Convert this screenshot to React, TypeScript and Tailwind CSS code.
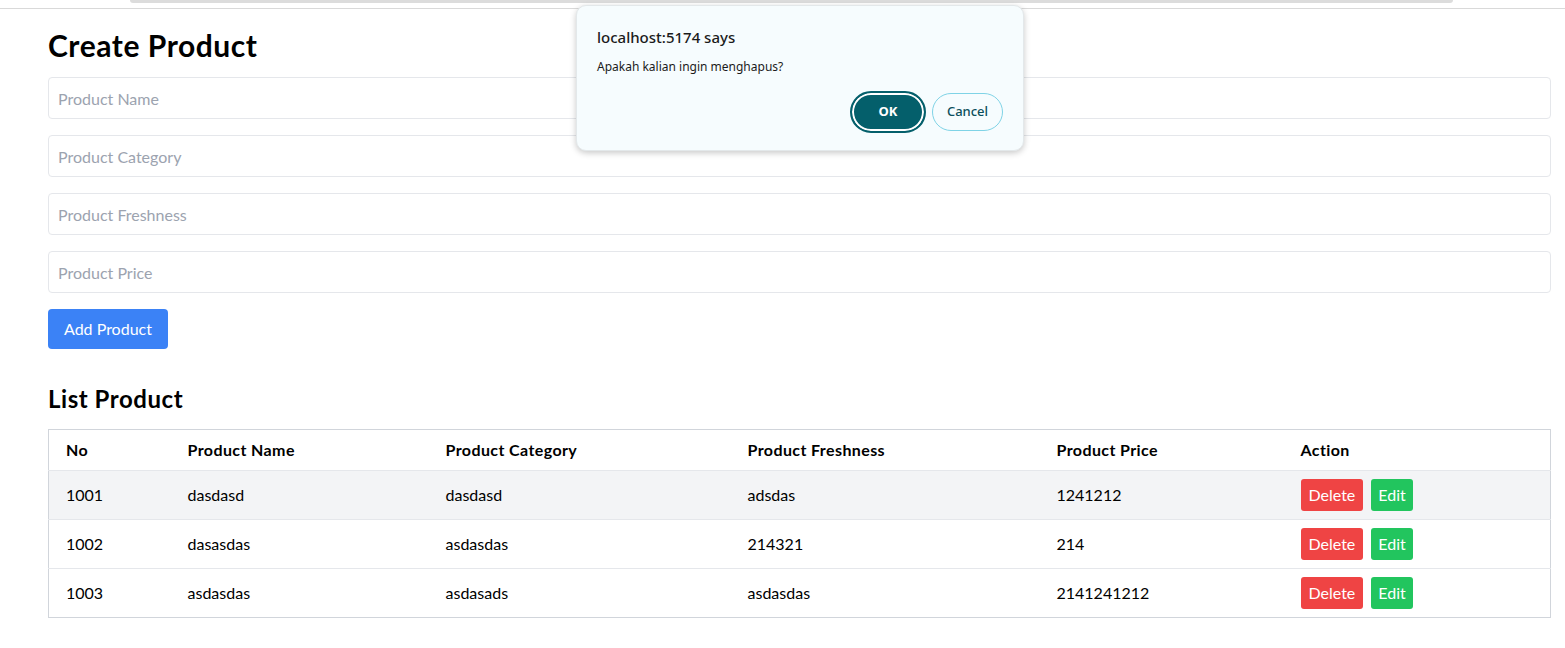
import React from "react";

const rows = [
  { no: "1001", name: "dasdasd", cat: "dasdasd", fresh: "adsdas", price: "1241212" },
  { no: "1002", name: "dasasdas", cat: "asdasdas", fresh: "214321", price: "214" },
  { no: "1003", name: "asdasdas", cat: "asdasads", fresh: "asdasdas", price: "2141241212" },
];

const placeholders = ["Product Name", "Product Category", "Product Freshness", "Product Price"];

export default function App() {
  return (
    <div className="relative min-h-[648px] bg-white text-black" style={{ fontFamily: "Lato, 'Noto Sans', sans-serif" }}>
      <div className="h-[9px] border-b border-[#d9d9d9] relative">
        <div className="absolute left-[130px] right-[112px] top-0 h-[3px] bg-[#dcdcdc] rounded-b-[6px]" />
      </div>
      <div className="pl-12 pr-[14px] pt-[18px]">
        <h1 className="text-[30px] leading-[36px] font-bold tracking-[0.55px] mb-[14px]">Create Product</h1>
        <div className="flex flex-col gap-4">
          {placeholders.map((p) => (
            <input
              key={p}
              placeholder={p}
              className="h-[42px] w-full border border-[#e5e7eb] rounded-[4px] px-[9px] text-[16px] placeholder:text-[#9ca3af] outline-none"
            />
          ))}
        </div>
        <button className="mt-4 h-[40px] px-4 bg-[#3b82f6] text-white text-[16px] rounded-[4px]">Add Product</button>
        <h2 className="mt-[34px] text-[24px] leading-[32px] font-bold tracking-[0.55px] mb-[14px]">List Product</h2>
        <table className="w-full border border-[#d1d5db] border-collapse text-[16px] text-left">
          <thead>
            <tr className="h-[41px] tracking-[0.4px]">
              <th className="w-[123px] pl-[17px] font-bold">No</th>
              <th className="w-[258px] pl-[16px] font-bold">Product Name</th>
              <th className="w-[302px] pl-[16px] font-bold">Product Category</th>
              <th className="w-[309px] pl-[16px] font-bold">Product Freshness</th>
              <th className="w-[244px] pl-[16px] font-bold">Product Price</th>
              <th className="pl-[16px] font-bold">Action</th>
            </tr>
          </thead>
          <tbody>
            {rows.map((r, i) => (
              <tr key={r.no} className={`h-[49px] border-t border-[#e5e7eb] ${i === 0 ? "bg-[#f3f4f6]" : ""}`}>
                <td className="pl-[17px]">{r.no}</td>
                <td className="pl-[16px]">{r.name}</td>
                <td className="pl-[16px]">{r.cat}</td>
                <td className="pl-[16px]">{r.fresh}</td>
                <td className="pl-[16px]">{r.price}</td>
                <td className="pl-[16px]">
                  <div className="flex gap-2">
                    <button className="h-[32px] px-[8px] bg-[#ef4444] text-white rounded-[3px]">Delete</button>
                    <button className="h-[32px] px-[7px] bg-[#22c55e] text-white rounded-[3px]">Edit</button>
                  </div>
                </td>
              </tr>
            ))}
          </tbody>
        </table>
      </div>

      <div className="absolute left-[576px] top-[5px] w-[448px] h-[146px] bg-[#f6fcfe] rounded-[10px] border border-[#e3e8ea] shadow-[0_2px_6px_rgba(0,0,0,0.22)] px-[20px] pt-[24px]" style={{ fontFamily: "'Noto Sans', sans-serif" }}>
        <div className="text-[15px] leading-[15px] text-[#1b1b1b] font-medium">localhost:5174 says</div>
        <div className="mt-[15px] text-[12px] leading-[14px] text-[#1b1b1b]">Apakah kalian ingin menghapus?</div>
        <div className="flex justify-end gap-[6px] mt-[17px] items-center">
          <button className="h-[42px] w-[76px] rounded-full bg-[#045f6b] text-white text-[13px] font-bold border-[2px] border-[#045f6b] shadow-[inset_0_0_0_2px_#ffffff]">OK</button>
          <button className="h-[38px] w-[71px] rounded-full border border-[#7fd3e6] text-[#0b4f5c] text-[13px] font-medium bg-[#f6fcfe]">Cancel</button>
        </div>
      </div>
    </div>
  );
}
